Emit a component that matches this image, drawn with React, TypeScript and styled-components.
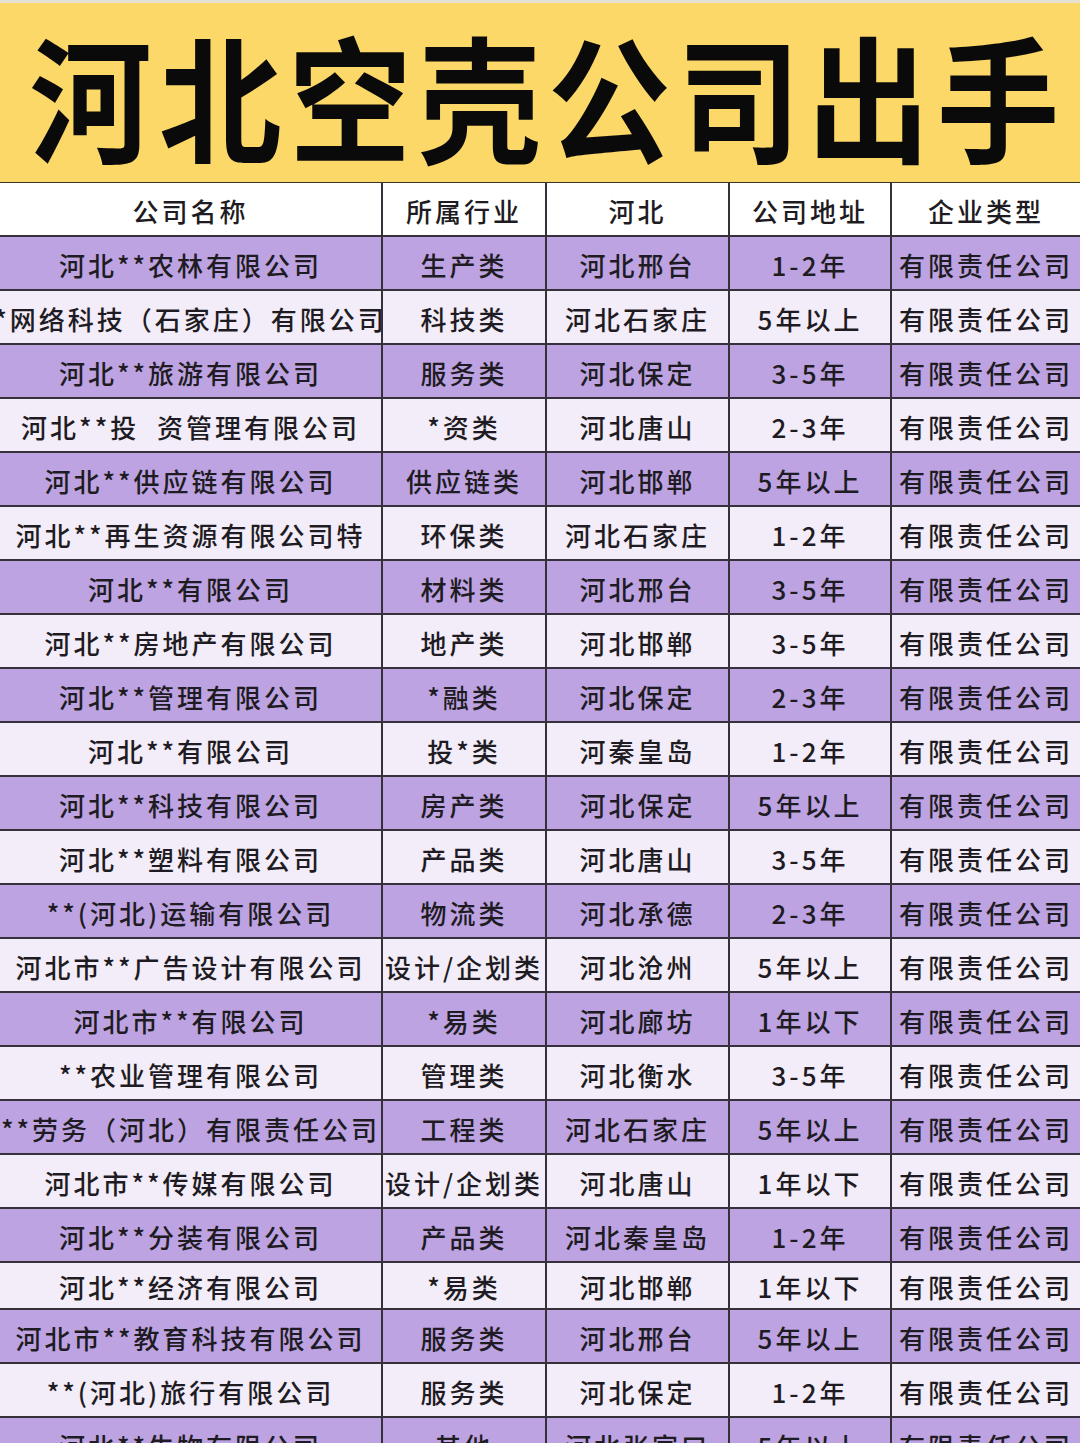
import React from "react";
import styled, { createGlobalStyle } from "styled-components";

type Row = [string, string, string, string, string];

const rows: Row[] = [
  ["河北**农林有限公司", "生产类", "河北邢台", "1-2年", "有限责任公司"],
  ["*网络科技（石家庄）有限公司", "科技类", "河北石家庄", "5年以上", "有限责任公司"],
  ["河北**旅游有限公司", "服务类", "河北保定", "3-5年", "有限责任公司"],
  ["河北**投  资管理有限公司", "*资类", "河北唐山", "2-3年", "有限责任公司"],
  ["河北**供应链有限公司", "供应链类", "河北邯郸", "5年以上", "有限责任公司"],
  ["河北**再生资源有限公司特", "环保类", "河北石家庄", "1-2年", "有限责任公司"],
  ["河北**有限公司", "材料类", "河北邢台", "3-5年", "有限责任公司"],
  ["河北**房地产有限公司", "地产类", "河北邯郸", "3-5年", "有限责任公司"],
  ["河北**管理有限公司", "*融类", "河北保定", "2-3年", "有限责任公司"],
  ["河北**有限公司", "投*类", "河秦皇岛", "1-2年", "有限责任公司"],
  ["河北**科技有限公司", "房产类", "河北保定", "5年以上", "有限责任公司"],
  ["河北**塑料有限公司", "产品类", "河北唐山", "3-5年", "有限责任公司"],
  ["**(河北)运输有限公司", "物流类", "河北承德", "2-3年", "有限责任公司"],
  ["河北市**广告设计有限公司", "设计/企划类", "河北沧州", "5年以上", "有限责任公司"],
  ["河北市**有限公司", "*易类", "河北廊坊", "1年以下", "有限责任公司"],
  ["**农业管理有限公司", "管理类", "河北衡水", "3-5年", "有限责任公司"],
  ["**劳务（河北）有限责任公司", "工程类", "河北石家庄", "5年以上", "有限责任公司"],
  ["河北市**传媒有限公司", "设计/企划类", "河北唐山", "1年以下", "有限责任公司"],
  ["河北**分装有限公司", "产品类", "河北秦皇岛", "1-2年", "有限责任公司"],
  ["河北**经济有限公司", "*易类", "河北邯郸", "1年以下", "有限责任公司"],
  ["河北市**教育科技有限公司", "服务类", "河北邢台", "5年以上", "有限责任公司"],
  ["**(河北)旅行有限公司", "服务类", "河北保定", "1-2年", "有限责任公司"],
  ["河北**生物有限公司", "其他", "河北张家口", "5年以上", "有限责任公司"],
];

const headers: Row = ["公司名称", "所属行业", "河北", "公司地址", "企业类型"];

const GlobalStyle = createGlobalStyle`
  html, body {
    margin: 0;
    padding: 0;
    background: #ffffff;
  }
  body {
    width: 1080px;
    height: 1443px;
    overflow: hidden;
    font-family: "Noto Sans CJK SC", "Noto Sans", sans-serif;
  }
`;

const Page = styled.div`
  width: 1080px;
  height: 1443px;
  overflow: hidden;
  display: flex;
  flex-direction: column;
`;

const Banner = styled.header`
  height: 179px;
  flex-shrink: 0;
  background: #fcd868;
  border-top: 3px solid #e6e1d3;
  border-bottom: 1px solid #3a3424;
  display: flex;
  align-items: center;
  justify-content: center;
`;

const Title = styled.h1`
  margin: 0;
  font-family: "Noto Sans CJK SC", sans-serif;
  font-weight: 700;
  font-size: 136px;
  line-height: 1;
  letter-spacing: 8px;
  color: #0a0a0a;
  white-space: nowrap;
  transform: translate(8px, 1px) scaleX(0.9);
`;

const Table = styled.div`
  display: flex;
  flex-direction: column;
`;

const TableRow = styled.div<{ $tone: "head" | "dark" | "light"; $h?: number }>`
  display: grid;
  grid-template-columns: 383px 164px 183px 162px 188px;
  height: ${(p) => p.$h ?? 54}px;
  flex-shrink: 0;
  box-sizing: border-box;
  border-bottom: 2px solid #35303a;
  background: ${(p) =>
    p.$tone === "head" ? "#ffffff" : p.$tone === "dark" ? "#bda3e2" : "#f3ecf9"};
`;

const Cell = styled.div`
  display: flex;
  align-items: center;
  justify-content: center;
  overflow: hidden;
  white-space: pre;
  box-sizing: border-box;
  border-right: 2px solid #35303a;
  font-size: 26px;
  font-weight: 500;
  letter-spacing: 3px;
  color: #1e1c22;
  padding-top: 2px;

  &:last-child {
    border-right: none;
  }
`;

const CellText = styled.span`
  flex-shrink: 0;
`;

export default function App() {
  return (
    <Page>
      <GlobalStyle />
      <Banner>
        <Title>河北空壳公司出手</Title>
      </Banner>
      <Table>
        <TableRow $tone="head">
          {headers.map((h, i) => (
            <Cell key={i}>
              <CellText>{h}</CellText>
            </Cell>
          ))}
        </TableRow>
        {rows.map((r, idx) => (
          <TableRow
            key={idx}
            $tone={idx % 2 === 0 ? "dark" : "light"}
            $h={idx === 19 ? 47 : 54}
          >
            {r.map((c, i) => (
              <Cell key={i}>
                <CellText>{c}</CellText>
              </Cell>
            ))}
          </TableRow>
        ))}
      </Table>
    </Page>
  );
}
